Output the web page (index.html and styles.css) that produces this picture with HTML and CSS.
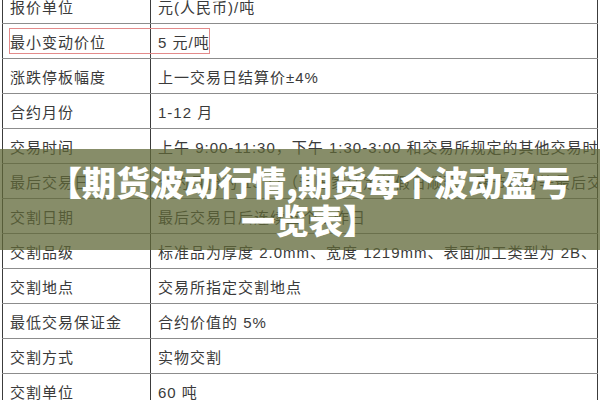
FILE: index.html
```html
<!DOCTYPE html>
<html lang="zh">
<head>
<meta charset="utf-8">
<link rel="stylesheet" href="styles.css">
</head>
<body>
<div class="page">
  <table class="spec">
    <tr><td class="k">报价单位</td><td class="v"><div class="cell">元(人民币)/吨</div></td></tr>
    <tr><td class="k">最小变动价位</td><td class="v"><div class="cell">5 元/吨</div></td></tr>
    <tr><td class="k">涨跌停板幅度</td><td class="v"><div class="cell">上一交易日结算价±4%</div></td></tr>
    <tr><td class="k">合约月份</td><td class="v"><div class="cell">1-12 月</div></td></tr>
    <tr><td class="k">交易时间</td><td class="v"><div class="cell">上午 9:00-11:30，下午 1:30-3:00 和交易所规定的其他交易时间</div></td></tr>
    <tr><td class="k">最后交易日</td><td class="v"><div class="cell">合约月份的 15 日（遇国家法定节假日顺延，春节月份等最后交易日</div></td></tr>
    <tr><td class="k">交割日期</td><td class="v"><div class="cell">最后交易日后连续五个工作日</div></td></tr>
    <tr><td class="k">交割品级</td><td class="v"><div class="cell">标准品为厚度 2.0mm、宽度 1219mm、表面加工类型为 2B、</div></td></tr>
    <tr><td class="k">交割地点</td><td class="v"><div class="cell">交易所指定交割地点</div></td></tr>
    <tr><td class="k">最低交易保证金</td><td class="v"><div class="cell">合约价值的 5%</div></td></tr>
    <tr><td class="k">交割方式</td><td class="v"><div class="cell">实物交割</div></td></tr>
    <tr><td class="k">交割单位</td><td class="v"><div class="cell">60 吨</div></td></tr>
  </table>
  <div class="mark"></div>
  <div class="banner">
    <h1 class="title">【期货波动行情,期货每个波动盈亏<br>一览表】</h1>
  </div>
</div>
</body>
</html>
```

FILE: styles.css
```css
html, body {
  margin: 0;
  padding: 0;
  background: #ffffff;
}
.page {
  position: relative;
  width: 600px;
  height: 400px;
  overflow: hidden;
  font-family: "Liberation Sans", "Noto Sans CJK SC", sans-serif;
}
.spec {
  margin: -12px 0 0 2px;
  width: 596px;
  border-collapse: collapse;
  table-layout: fixed;
}
.spec td {
  height: 34px;
  padding: 0 0 0 7px;
  border-top: 1px solid #8c8c8c;
  border-bottom: 1px solid #8c8c8c;
  font-size: 15px;
  letter-spacing: 1px;
  color: #3a3a3a;
  white-space: nowrap;
  vertical-align: middle;
}
.cell {
  overflow: hidden;
  white-space: nowrap;
}
.spec .k {
  width: 140px;
  border-left: 1px solid #3c3c3c;
  border-right: 1px solid #3c3c3c;
}
.spec .v {
  border-right: 1px solid #3c3c3c;
}
.mark {
  position: absolute;
  left: 9px;
  top: 28px;
  width: 199px;
  height: 24px;
  border: 1px solid #e38a8a;
}
.banner {
  position: absolute;
  left: 0;
  top: 149px;
  width: 600px;
  height: 101px;
  background: rgba(95, 103, 55, 0.75);
  display: flex;
  align-items: center;
  justify-content: center;
}
.title {
  margin: 0;
  padding: 2px 0 0 18px;
  text-align: center;
  color: #ffffff;
  font-family: "Noto Sans CJK SC", sans-serif;
  font-weight: 900;
  font-size: 34px;
  line-height: 38px;
  white-space: nowrap;
}
```
